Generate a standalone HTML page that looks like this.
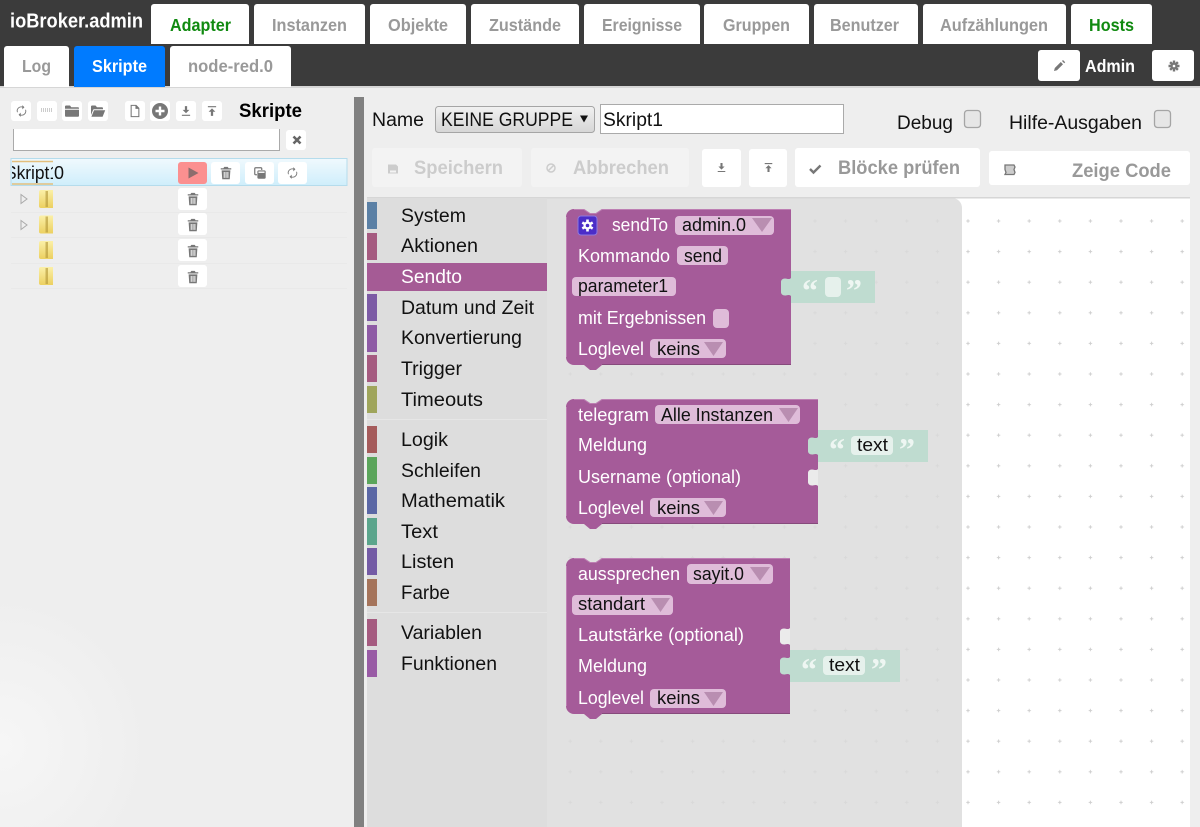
<!DOCTYPE html>
<html lang="de">
<head>
<meta charset="utf-8">
<title>ioBroker.admin</title>
<style>
html,body{margin:0;padding:0;width:1200px;height:827px;overflow:hidden;background:#eee}
svg{display:block;font-family:"Liberation Sans",Arial,sans-serif}
.tab{font-weight:bold;font-size:17.5px;fill:#999}
.g{fill:#108a10}
.tb{font-size:19.5px;fill:#111}
.bl{font-size:18px;fill:#fff}
.fd{font-size:18px;fill:#111}
.lab{font-size:19px;fill:#111}
.q{font-family:"Liberation Serif",serif;font-weight:bold;font-size:32px;fill:#eef6f2}
.ic{fill:#777}
</style>
</head>
<body>
<svg width="1200" height="827" viewBox="0 0 1200 827" xmlns="http://www.w3.org/2000/svg">
<defs>
<radialGradient id="lg" gradientUnits="userSpaceOnUse" cx="0" cy="745" r="150"><stop offset="0" stop-color="#f6f6f6"/><stop offset="1" stop-color="#eeeeee"/></radialGradient>
<linearGradient id="sel" x1="0" y1="0" x2="0" y2="1"><stop offset="0" stop-color="#f0f9fd"/><stop offset="1" stop-color="#cfeefb"/></linearGradient>
<linearGradient id="selb" x1="0" y1="0" x2="0" y2="1"><stop offset="0" stop-color="#f1f1f1"/><stop offset="1" stop-color="#d6d6d6"/></linearGradient>
<linearGradient id="fol" x1="0" y1="0" x2="0" y2="1"><stop offset="0" stop-color="#fbf0a8"/><stop offset="1" stop-color="#ecd060"/></linearGradient>
<pattern id="dots" patternUnits="userSpaceOnUse" x="952.7" y="205.7" width="30.6" height="30.6">
<path d="M15.3 13.6v3.4M13.6 15.3h3.4" stroke="#cfcfcf" stroke-width="1"/>
</pattern>
<pattern id="dots2" patternUnits="userSpaceOnUse" x="952.7" y="205.7" width="30.6" height="30.6">
<path d="M15.3 13.6v3.4M13.6 15.3h3.4" stroke="#d9d9d9" stroke-width="1"/>
</pattern>
<symbol id="trash" viewBox="0 0 16 16"><path fill-rule="evenodd" d="M6 1h4l1 1.5h3V4H2V2.5h3zM3 5h10l-.7 10.2H3.7zM5.4 6.8v6.8h1.1V6.8zm2.1 0v6.8h1.1V6.8zm2.1 0v6.8h1.1V6.8z"/></symbol>
<symbol id="sync" viewBox="0 0 16 16"><path fill="none" stroke="currentColor" stroke-width="1.1" d="M3 9.5A5 5 0 0 1 9.5 3.2M13 6.5A5 5 0 0 1 6.5 12.8"/><path d="M9 .8l2.6 2.6L9 6zM7 10l-2.6 2.6L7 15.2z"/></symbol>
<symbol id="folder" viewBox="0 0 16 16"><path d="M1 3.5C1 3 1.4 2.5 2 2.5h4l1.3 1.8H14c.6 0 1 .4 1 1v.5H1zM1 6.8h14v6c0 .6-.4 1-1 1H2c-.6 0-1-.4-1-1z"/></symbol>
<symbol id="folderopen" viewBox="0 0 16 16"><path d="M1 12V3.5C1 3 1.4 2.5 2 2.5h3.5L7 4.2h5c.5 0 1 .4 1 1V6.3H4.2C3.6 6.3 3.2 6.6 3 7.1zM4 7.3h11.2L12.6 13.8H1.4z"/></symbol>
<symbol id="file" viewBox="0 0 16 16"><path fill-rule="evenodd" d="M3 1h6.5L13 4.5V15H3zM4.2 2.2v11.6h7.6V5.5H8.5V2.2z"/></symbol>
<symbol id="plus" viewBox="0 0 16 16"><path fill-rule="evenodd" d="M8 0a8 8 0 1 1 0 16A8 8 0 0 1 8 0zM6.8 3.5v3.3H3.5v2.4h3.3v3.3h2.4V9.200h3.300V6.800H9.200V3.500z"/></symbol>
<symbol id="down" viewBox="0 0 16 16"><path d="M6.500 1.500h3v5h3L8 11 3.500 6.500h3zM2.500 13h11v1.500h-11z"/></symbol>
<symbol id="up" viewBox="0 0 16 16"><path d="M2.500 1.500h11V3h-11zM8 4.500l4.500 4.500h-3v5.500h-3V9h-3z"/></symbol>
<symbol id="copy" viewBox="0 0 16 16"><path fill="none" stroke="currentColor" stroke-width="1.400" d="M10 4.500V3.200C10 2.500 9.500 2 8.800 2H3.200C2.500 2 2 2.500 2 3.200v5.600C2 9.500 2.500 10 3.200 10H4.500"/><rect x="5" y="5" width="9.500" height="9.500" rx="1.500"/><rect x="6.200" y="6.300" width="7" height="1.600" fill="#fff"/></symbol>
</defs>

<!-- page -->
<rect width="1200" height="827" fill="#eeeeee"/>
<rect y="560" width="354" height="267" fill="url(#lg)"/>

<!-- header -->
<rect width="1200" height="86" fill="#3b3b3b"/>
<rect y="86" width="1200" height="2" fill="#d6d6d6"/>
<text x="10" y="27.500" font-weight="bold" font-size="20" fill="#fff" textLength="133" lengthAdjust="spacingAndGlyphs">ioBroker.admin</text>

<g fill="#fff">
<path d="M151 44V7a3 3 0 0 1 3-3h92a3 3 0 0 1 3 3v37z"/>
<path d="M254 44V7a3 3 0 0 1 3-3h105a3 3 0 0 1 3 3v37z"/>
<path d="M370 44V7a3 3 0 0 1 3-3h90a3 3 0 0 1 3 3v37z"/>
<path d="M471 44V7a3 3 0 0 1 3-3h102a3 3 0 0 1 3 3v37z"/>
<path d="M584 44V7a3 3 0 0 1 3-3h110a3 3 0 0 1 3 3v37z"/>
<path d="M704 44V7a3 3 0 0 1 3-3h99a3 3 0 0 1 3 3v37z"/>
<path d="M814 44V7a3 3 0 0 1 3-3h98a3 3 0 0 1 3 3v37z"/>
<path d="M923 44V7a3 3 0 0 1 3-3h137a3 3 0 0 1 3 3v37z"/>
<path d="M1071 44V7a3 3 0 0 1 3-3h75a3 3 0 0 1 3 3v37z"/>
<path d="M4 87V49a3 3 0 0 1 3-3h59a3 3 0 0 1 3 3v38z"/>
<path d="M170 87V49a3 3 0 0 1 3-3h115a3 3 0 0 1 3 3v38z"/>
<rect x="1038" y="50" width="42" height="31" rx="3"/>
<rect x="1152" y="50" width="42" height="31" rx="3"/>
</g>
<path d="M74 87V49a3 3 0 0 1 3-3h85a3 3 0 0 1 3 3v38z" fill="#007bff"/>

<text class="tab g" x="170" y="31" textLength="61" lengthAdjust="spacingAndGlyphs">Adapter</text>
<text class="tab" x="272" y="31" textLength="75" lengthAdjust="spacingAndGlyphs">Instanzen</text>
<text class="tab" x="388" y="31" textLength="60" lengthAdjust="spacingAndGlyphs">Objekte</text>
<text class="tab" x="489" y="31" textLength="72" lengthAdjust="spacingAndGlyphs">Zustände</text>
<text class="tab" x="602" y="31" textLength="80" lengthAdjust="spacingAndGlyphs">Ereignisse</text>
<text class="tab" x="723" y="31" textLength="67" lengthAdjust="spacingAndGlyphs">Gruppen</text>
<text class="tab" x="830" y="31" textLength="69" lengthAdjust="spacingAndGlyphs">Benutzer</text>
<text class="tab" x="940" y="31" textLength="108" lengthAdjust="spacingAndGlyphs">Aufzählungen</text>
<text class="tab g" x="1089" y="31" textLength="45" lengthAdjust="spacingAndGlyphs">Hosts</text>
<text class="tab" x="22" y="72" textLength="29" lengthAdjust="spacingAndGlyphs">Log</text>
<text class="tab" x="92" y="72" textLength="55" lengthAdjust="spacingAndGlyphs" style="fill:#fff">Skripte</text>
<text class="tab" x="188" y="72" textLength="85" lengthAdjust="spacingAndGlyphs">node-red.0</text>
<text x="1085" y="72" font-weight="bold" font-size="17.500" fill="#fff" textLength="50" lengthAdjust="spacingAndGlyphs">Admin</text>
<path d="M1054 71l.8-3 6-6 2.200 2.200-6 6zM1062 61l1-1 2.200 2.200-1 1z" fill="#777"/>
<g transform="translate(1174 66)" fill="#777"><circle r="3.600"/><path d="M-1.200-5.500h2.400v11h-2.400zM-5.500-1.200h11v2.400h-11z"/><path d="M-1.200-5.500h2.400v11h-2.400zM-5.500-1.200h11v2.400h-11z" transform="rotate(45)"/></g>
<circle cx="1174" cy="66" r="1.300" fill="#fff"/>

<!-- left toolbar -->
<g fill="#fff">
<rect x="11" y="101" width="20" height="20" rx="3"/><rect x="37" y="101" width="20" height="20" rx="3"/><rect x="62" y="101" width="20" height="20" rx="3"/><rect x="88" y="101" width="20" height="20" rx="3"/>
<rect x="125" y="101" width="20" height="20" rx="3"/><rect x="150" y="101" width="20" height="20" rx="3"/><rect x="176" y="101" width="20" height="20" rx="3"/><rect x="202" y="101" width="20" height="20" rx="3"/>
</g>
<g color="#777" fill="#777">
<use href="#sync" x="15" y="104" width="13" height="14"/>
<path d="M41 109h12M41 111h12" stroke="#999" stroke-width="1" stroke-dasharray="1 1"/>
<use href="#folder" x="64" y="103" width="16" height="16"/>
<use href="#folderopen" x="90" y="103" width="16" height="16"/>
<use href="#file" x="128" y="104" width="14" height="14"/>
<use href="#plus" x="152" y="103" width="16" height="16"/>
<use href="#down" x="180" y="105" width="12" height="12"/>
<use href="#up" x="206" y="105" width="12" height="12"/>
</g>
<text x="239" y="117" font-weight="bold" font-size="19.500" fill="#000" textLength="63" lengthAdjust="spacingAndGlyphs">Skripte</text>

<!-- filter -->
<rect x="13" y="129" width="267" height="22" fill="#fff"/>
<path d="M13.500 129v21.500h266V129" fill="none" stroke="#aaa"/>
<rect x="286" y="130" width="20" height="20" rx="3" fill="#fff"/>
<path d="M293.500 136.500l7 7m0-7l-7 7" stroke="#666" stroke-width="2.600"/>

<!-- tree -->
<rect x="11" y="158.500" width="336" height="27" fill="url(#sel)" stroke="#b5dcec"/>
<path d="M12 161.500h41M12 184h41" stroke="#e3bf7c" stroke-width="1.500"/>
<clipPath id="sk"><rect x="12" y="160" width="41" height="25"/></clipPath>
<text x="5" y="179" font-size="18" fill="#111" clip-path="url(#sk)" textLength="54" lengthAdjust="spacingAndGlyphs">Skript1</text>
<text x="54" y="179" font-size="18" fill="#111">0</text>
<path d="M11 212.500h336M11 237.500h336M11 263.500h336M11 288.500h336" stroke="#e9e9e9"/>
<rect x="178" y="162" width="29" height="22" rx="3" fill="#fb9090"/>
<path d="M188.500 167.500l10 5.500-10 5.500z" fill="#8c6d6d"/>
<g fill="#fff">
<rect x="211" y="162" width="29" height="22" rx="3"/><rect x="245" y="162" width="29" height="22" rx="3"/><rect x="278" y="162" width="29" height="22" rx="3"/>
<rect x="178" y="188" width="29" height="22" rx="3"/><rect x="178" y="213" width="29" height="22" rx="3"/><rect x="178" y="239" width="29" height="22" rx="3"/><rect x="178" y="265" width="29" height="22" rx="3"/>
</g>
<g fill="#777" color="#777">
<use href="#trash" x="219" y="166" width="14" height="14"/>
<use href="#copy" x="253" y="166" width="14" height="14"/>
<use href="#sync" x="286" y="166" width="13" height="14"/>
<use href="#trash" x="186" y="192" width="14" height="14"/>
<use href="#trash" x="186" y="218" width="14" height="14"/>
<use href="#trash" x="186" y="244" width="14" height="14"/>
<use href="#trash" x="186" y="270" width="14" height="14"/>
</g>
<path d="M21 194.500l6 4.500-6 4.500zM21 220.500l6 4.500-6 4.500z" fill="#eee" stroke="#aaa"/>
<g>
<path d="M39 192a2 2 0 0 1 2-2h12v18H41a2 2 0 0 1-2-2z" fill="url(#fol)"/>
<path d="M39 217.500a2 2 0 0 1 2-2h12v18H41a2 2 0 0 1-2-2z" fill="url(#fol)"/>
<path d="M39 243a2 2 0 0 1 2-2h12v18H41a2 2 0 0 1-2-2z" fill="url(#fol)"/>
<path d="M39 269a2 2 0 0 1 2-2h12v18H41a2 2 0 0 1-2-2z" fill="url(#fol)"/>
<path d="M45.500 191h2.500v16h-2.500zM45.500 216.500h2.500v16h-2.500zM45.500 242h2.500v16h-2.500zM45.500 268h2.500v16h-2.500z" fill="#b59a3a" opacity=".65"/>
</g>

<!-- splitter -->
<rect x="354" y="97" width="10" height="730" fill="#808080"/>

<!-- top form -->
<text class="lab" x="372" y="126" textLength="52" lengthAdjust="spacingAndGlyphs">Name</text>
<rect x="435.500" y="106.500" width="159" height="26" rx="3" fill="url(#selb)" stroke="#a5a5a5"/>
<text class="lab" x="441" y="126" textLength="132" lengthAdjust="spacingAndGlyphs">KEINE GRUPPE</text>
<path d="M580 115.500h8l-4 7z" fill="#111"/>
<rect x="600.500" y="104.500" width="243" height="29" fill="#fff" stroke="#aaa"/>
<text class="lab" x="603" y="126" textLength="60" lengthAdjust="spacingAndGlyphs">Skript1</text>
<text class="lab" x="897" y="129" textLength="56" lengthAdjust="spacingAndGlyphs">Debug</text>
<rect x="964.500" y="110.500" width="16" height="17" rx="3" fill="#e6e6e6" stroke="#a5a5a5" stroke-width="1.300"/>
<text class="lab" x="1009" y="129" textLength="133" lengthAdjust="spacingAndGlyphs">Hilfe-Ausgaben</text>
<rect x="1154.500" y="110.500" width="16" height="17" rx="3" fill="#e6e6e6" stroke="#a5a5a5" stroke-width="1.300"/>

<!-- buttons -->
<rect x="372" y="148" width="150" height="39" rx="3" fill="#f3f3f3"/>
<rect x="531" y="148" width="158" height="39" rx="3" fill="#f3f3f3"/>
<rect x="702" y="149" width="39" height="38" rx="3" fill="#fff"/>
<rect x="749" y="149" width="38" height="38" rx="3" fill="#fff"/>
<rect x="795" y="148" width="185" height="39" rx="3" fill="#fff"/>
<rect x="989" y="151" width="201" height="34" rx="3" fill="#fff"/>
<path d="M388 164.500h8l2 2v7h-10zM390 170.500v2h6v-2z" fill="#ccc" fill-rule="evenodd"/>
<circle cx="551" cy="168" r="4" fill="none" stroke="#ccc" stroke-width="1.500"/><path d="M548.500 170.500l5-5" stroke="#ccc" stroke-width="1.500"/>
<text x="414" y="174" font-weight="bold" font-size="19" fill="#ccc" textLength="89" lengthAdjust="spacingAndGlyphs">Speichern</text>
<text x="573" y="174" font-weight="bold" font-size="19" fill="#ccc" textLength="96" lengthAdjust="spacingAndGlyphs">Abbrechen</text>
<g fill="#777"><use href="#down" x="716" y="162" width="11" height="11"/><use href="#up" x="763" y="162" width="11" height="11"/></g>
<path d="M810 169l3.500 3.500 7-7" fill="none" stroke="#777" stroke-width="2.400"/>
<text x="838" y="174" font-weight="bold" font-size="19" fill="#999" textLength="122" lengthAdjust="spacingAndGlyphs">Blöcke prüfen</text>
<path d="M1005 165h9l1 2-1 2.500 1 3-1 2h-9l1-2-1-3z" fill="#ccc" stroke="#777" stroke-width="1.300"/>
<text x="1072" y="177" font-weight="bold" font-size="19" fill="#999" textLength="99" lengthAdjust="spacingAndGlyphs">Zeige Code</text>

<!-- workspace -->
<rect x="367" y="197" width="823" height="630" fill="#fff"/>
<rect x="962" y="198" width="228" height="629" fill="url(#dots)"/>
<path d="M547 198H952a10 10 0 0 1 10 10V827H547z" fill="#e1e1e1"/>
<path d="M547 198H952a10 10 0 0 1 10 10V827H547z" fill="url(#dots2)"/>
<rect x="367" y="197" width="823" height="1.500" fill="#d6d6d6"/>
<rect x="367" y="198" width="180" height="629" fill="#dddddd"/>

<!-- toolbox -->
<rect x="367" y="202" width="10" height="27" fill="#5b80a5"/>
<rect x="367" y="233" width="10" height="27" fill="#a55b80"/>
<rect x="367" y="263" width="180" height="28" fill="#a55b95"/>
<rect x="367" y="294" width="10" height="27" fill="#7c5ba5"/>
<rect x="367" y="325" width="10" height="27" fill="#8e5ba5"/>
<rect x="367" y="355" width="10" height="27" fill="#a55b80"/>
<rect x="367" y="386" width="10" height="27" fill="#9fa55b"/>
<rect x="367" y="419" width="180" height="1" fill="#e6e6e6"/>
<rect x="367" y="426" width="10" height="27" fill="#a55b5b"/>
<rect x="367" y="457" width="10" height="27" fill="#5ba55b"/>
<rect x="367" y="487" width="10" height="27" fill="#5b67a5"/>
<rect x="367" y="518" width="10" height="27" fill="#5ba58c"/>
<rect x="367" y="548" width="10" height="27" fill="#745ba5"/>
<rect x="367" y="579" width="10" height="27" fill="#a5745b"/>
<rect x="367" y="612" width="180" height="1" fill="#e6e6e6"/>
<rect x="367" y="619" width="10" height="27" fill="#a55b80"/>
<rect x="367" y="650" width="10" height="27" fill="#995ba5"/>
<text class="tb" x="401" y="222" textLength="65" lengthAdjust="spacingAndGlyphs">System</text>
<text class="tb" x="401" y="252" textLength="77" lengthAdjust="spacingAndGlyphs">Aktionen</text>
<text class="tb" x="401" y="283" textLength="61" lengthAdjust="spacingAndGlyphs" style="fill:#fff">Sendto</text>
<text class="tb" x="401" y="314" textLength="133" lengthAdjust="spacingAndGlyphs">Datum und Zeit</text>
<text class="tb" x="401" y="344" textLength="121" lengthAdjust="spacingAndGlyphs">Konvertierung</text>
<text class="tb" x="401" y="375" textLength="61" lengthAdjust="spacingAndGlyphs">Trigger</text>
<text class="tb" x="401" y="406" textLength="82" lengthAdjust="spacingAndGlyphs">Timeouts</text>
<text class="tb" x="401" y="446" textLength="47" lengthAdjust="spacingAndGlyphs">Logik</text>
<text class="tb" x="401" y="477" textLength="80" lengthAdjust="spacingAndGlyphs">Schleifen</text>
<text class="tb" x="401" y="507" textLength="104" lengthAdjust="spacingAndGlyphs">Mathematik</text>
<text class="tb" x="401" y="538" textLength="37" lengthAdjust="spacingAndGlyphs">Text</text>
<text class="tb" x="401" y="568" textLength="53" lengthAdjust="spacingAndGlyphs">Listen</text>
<text class="tb" x="401" y="599" textLength="49" lengthAdjust="spacingAndGlyphs">Farbe</text>
<text class="tb" x="401" y="639" textLength="81" lengthAdjust="spacingAndGlyphs">Variablen</text>
<text class="tb" x="401" y="670" textLength="96" lengthAdjust="spacingAndGlyphs">Funktionen</text>

<!-- block 1 -->
<path d="M566 217a8 8 0 0 1 8-8h10l6 4h6l6-4H791V365H602l-6 5h-6l-6-5H574a8 8 0 0 1-8-8z" fill="#a55b99"/>
<path d="M574 209.500h10l6 4h6l6-4H791M566.500 357V217" fill="none" stroke="#bd7fb3" stroke-width="1"/>
<path d="M602 364.500H791" fill="none" stroke="#864a7c" stroke-width="1"/>
<rect x="578" y="216" width="19" height="19" rx="3" fill="#4b2dc8" stroke="#8d78e0"/>
<g transform="translate(587.500 225.500)" fill="#fff"><circle r="4"/><path d="M-1.300-6h2.600v12h-2.600z"/><path d="M-1.300-6h2.600v12h-2.600z" transform="rotate(60)"/><path d="M-1.300-6h2.600v12h-2.600z" transform="rotate(120)"/></g>
<circle cx="587.500" cy="225.500" r="1.800" fill="#4b2dc8"/>
<text class="bl" x="612" y="231" textLength="56" lengthAdjust="spacingAndGlyphs">sendTo</text>
<rect x="675" y="216" width="99" height="19" rx="4" fill="#dfbcd9"/>
<text class="fd" x="682" y="231" textLength="64" lengthAdjust="spacingAndGlyphs">admin.0</text>
<path d="M752 218h20l-10 14z" fill="#b98eb1"/>
<text class="bl" x="578" y="262" textLength="92" lengthAdjust="spacingAndGlyphs">Kommando</text>
<rect x="677" y="246" width="51" height="19" rx="4" fill="#dfbcd9"/>
<text class="fd" x="684" y="262" textLength="38" lengthAdjust="spacingAndGlyphs">send</text>
<rect x="572" y="277" width="104" height="19" rx="4" fill="#dfbcd9"/>
<text class="fd" x="578" y="292" textLength="90" lengthAdjust="spacingAndGlyphs">parameter1</text>
<text class="bl" x="578" y="324" textLength="128" lengthAdjust="spacingAndGlyphs">mit Ergebnissen</text>
<rect x="713" y="309" width="16" height="19" rx="4" fill="#dfbcd9"/>
<text class="bl" x="578" y="355" textLength="66" lengthAdjust="spacingAndGlyphs">Loglevel</text>
<rect x="650" y="339" width="76" height="19" rx="4" fill="#dfbcd9"/>
<text class="fd" x="657" y="355" textLength="43" lengthAdjust="spacingAndGlyphs">keins</text>
<path d="M704 342h19l-9.500 14z" fill="#b98eb1"/>
<!-- string 1 -->
<path d="M791 271h84v32h-84v-7c-2-2-4-.5-6-.5-2.500 0-4-1.500-4-3.500v-10c0-2 1.500-3.500 4-3.500 2 0 4 1.500 6-.5z" fill="#bfdcd0"/>
<text class="q" x="802" y="301">“</text>
<rect x="825" y="277" width="16" height="20" rx="4" fill="#e6f1ec"/>
<text class="q" x="846" y="301">”</text>

<!-- block 2 -->
<path d="M566 407a8 8 0 0 1 8-8h10l6 4h6l6-4H818V524H602l-6 5h-6l-6-5H574a8 8 0 0 1-8-8z" fill="#a55b99"/>
<path d="M574 399.500h10l6 4h6l6-4H818M566.500 516V407" fill="none" stroke="#bd7fb3" stroke-width="1"/>
<path d="M602 523.500H818" fill="none" stroke="#864a7c" stroke-width="1"/>
<text class="bl" x="578" y="421" textLength="71" lengthAdjust="spacingAndGlyphs">telegram</text>
<rect x="655" y="405" width="145" height="19" rx="4" fill="#dfbcd9"/>
<text class="fd" x="661" y="421" textLength="112" lengthAdjust="spacingAndGlyphs">Alle Instanzen</text>
<path d="M779 408h19l-9.500 14z" fill="#b98eb1"/>
<text class="bl" x="578" y="451" textLength="69" lengthAdjust="spacingAndGlyphs">Meldung</text>
<text class="bl" x="578" y="483" textLength="163" lengthAdjust="spacingAndGlyphs">Username (optional)</text>
<text class="bl" x="578" y="514" textLength="66" lengthAdjust="spacingAndGlyphs">Loglevel</text>
<rect x="650" y="498" width="76" height="19" rx="4" fill="#dfbcd9"/>
<text class="fd" x="657" y="514" textLength="43" lengthAdjust="spacingAndGlyphs">keins</text>
<path d="M704 501h19l-9.500 14z" fill="#b98eb1"/>
<path d="M818 469c-2 2-4 .5-6 .5-2.500 0-4 1.500-4 3.500v9c0 2 1.500 3.500 4 3.500 2 0 4-1.500 6 .5z" fill="#ebebeb"/>
<path d="M818 430h110v32H818v-7c-2-2-4-.5-6-.5-2.500 0-4-1.500-4-3.500v-10c0-2 1.500-3.500 4-3.500 2 0 4 1.500 6-.5z" fill="#bfdcd0"/>
<text class="q" x="829" y="460">“</text>
<rect x="851" y="436" width="42" height="19" rx="4" fill="#e6f1ec"/>
<text class="fd" x="857" y="451" textLength="31" lengthAdjust="spacingAndGlyphs">text</text>
<text class="q" x="899" y="460">”</text>

<!-- block 3 -->
<path d="M566 566a8 8 0 0 1 8-8h10l6 4h6l6-4H790V714H602l-6 5h-6l-6-5H574a8 8 0 0 1-8-8z" fill="#a55b99"/>
<path d="M574 558.500h10l6 4h6l6-4H790M566.500 706V566" fill="none" stroke="#bd7fb3" stroke-width="1"/>
<path d="M602 713.500H790" fill="none" stroke="#864a7c" stroke-width="1"/>
<text class="bl" x="578" y="580" textLength="102" lengthAdjust="spacingAndGlyphs">aussprechen</text>
<rect x="687" y="564" width="86" height="20" rx="4" fill="#dfbcd9"/>
<text class="fd" x="693" y="580" textLength="51" lengthAdjust="spacingAndGlyphs">sayit.0</text>
<path d="M750 567h20l-10 14z" fill="#b98eb1"/>
<rect x="572" y="595" width="101" height="20" rx="4" fill="#dfbcd9"/>
<text class="fd" x="578" y="610" textLength="67" lengthAdjust="spacingAndGlyphs">standart</text>
<path d="M651 598h19l-9.500 14z" fill="#b98eb1"/>
<text class="bl" x="578" y="641" textLength="166" lengthAdjust="spacingAndGlyphs">Lautstärke (optional)</text>
<text class="bl" x="578" y="672" textLength="69" lengthAdjust="spacingAndGlyphs">Meldung</text>
<text class="bl" x="578" y="704" textLength="66" lengthAdjust="spacingAndGlyphs">Loglevel</text>
<rect x="650" y="689" width="76" height="19" rx="4" fill="#dfbcd9"/>
<text class="fd" x="657" y="704" textLength="43" lengthAdjust="spacingAndGlyphs">keins</text>
<path d="M704 692h19l-9.500 14z" fill="#b98eb1"/>
<path d="M790 628c-2 2-4 .5-6 .5-2.500 0-4 1.500-4 3.500v9c0 2 1.500 3.500 4 3.500 2 0 4-1.500 6 .5z" fill="#ebebeb"/>
<path d="M790 650h110v32H790v-7c-2-2-4-.5-6-.5-2.500 0-4-1.500-4-3.500v-10c0-2 1.500-3.500 4-3.500 2 0 4 1.500 6-.5z" fill="#bfdcd0"/>
<text class="q" x="801" y="680">“</text>
<rect x="823" y="656" width="42" height="19" rx="4" fill="#e6f1ec"/>
<text class="fd" x="829" y="671" textLength="31" lengthAdjust="spacingAndGlyphs">text</text>
<text class="q" x="871" y="680">”</text>
</svg>
</body>
</html>
